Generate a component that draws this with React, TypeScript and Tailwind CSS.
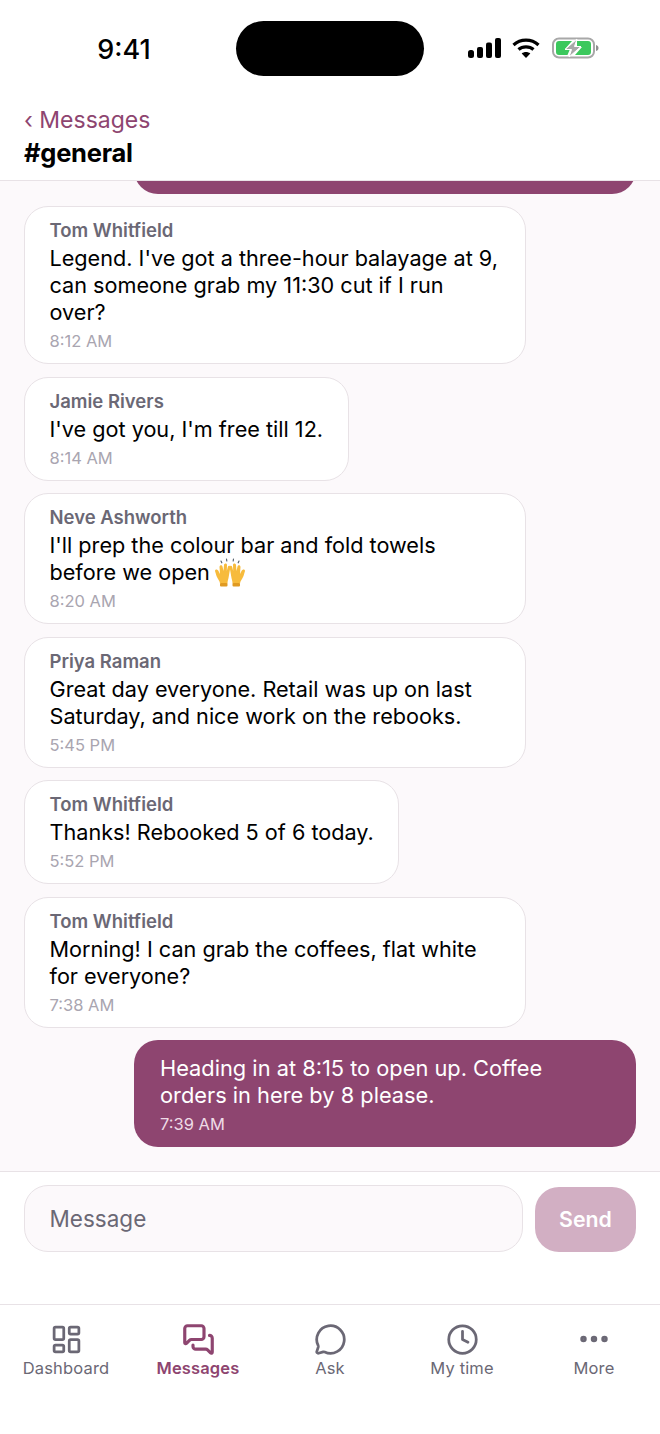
import React from 'react';
import { LayoutDashboard, MessagesSquare, MessageCircle, Clock, Ellipsis } from 'lucide-react';

const messages = [
  { name: 'Tom Whitfield', lines: ["Legend. I've got a three-hour balayage at 9,", 'can someone grab my 11:30 cut if I run', 'over?'], time: '8:12 AM', wide: true },
  { name: 'Jamie Rivers', lines: ["I've got you, I'm free till 12."], time: '8:14 AM' },
  { name: 'Neve Ashworth', lines: ["I'll prep the colour bar and fold towels", 'before we open'], time: '8:20 AM', wide: true, emoji: true },
  { name: 'Priya Raman', lines: ['Great day everyone. Retail was up on last', 'Saturday, and nice work on the rebooks.'], time: '5:45 PM', wide: true },
  { name: 'Tom Whitfield', lines: ['Thanks! Rebooked 5 of 6 today.'], time: '5:52 PM' },
  { name: 'Tom Whitfield', lines: ['Morning! I can grab the coffees, flat white', 'for everyone?'], time: '7:38 AM', wide: true },
];

function Hands() {
  return (
    <svg width="32" height="29" viewBox="0 0 32 29" className="inline-block align-[-5px] -mt-[8px] -mb-[2px] -ml-[2px]">
      <g fill="#f7bb3c">
        <path d="M1 13c0-2 2.500-2 3.500 0L6 16l-.5-7c0-2 2.500-2.500 3-.5L9.500 13l.5-6c.3-2 3-2 3 0l-.2 6 1-4c.5-1.800 2.700-1.300 2.500.5L14.500 20c-.5 2-1 3.500-1 5.500H6C6 23 3.500 21 2.500 18z" />
        <path d="M31 13c0-2-2.500-2-3.500 0L26 16l.5-7c0-2-2.500-2.500-3-.5L22.500 13l-.5-6c-.3-2-3-2-3 0l.2 6-1-4c-.5-1.800-2.700-1.300-2.500.5L17.500 20c.5 2 1 3.500 1 5.500H26c0-2.500 2.500-4.500 3.500-7.500z" />
      </g>
      <g fill="#e09a22">
        <rect x="6" y="25" width="7.500" height="3.500" rx="1" />
        <rect x="18.500" y="25" width="7.500" height="3.500" rx="1" />
      </g>
      <g stroke="#5b6670" strokeWidth="1.200" strokeLinecap="round">
        <path d="M7 3l.8 1.800M12.500 1l.3 2M19.500 1l-.3 2M25 3l-.8 1.800" />
      </g>
    </svg>
  );
}

function StatusIcons() {
  return (
    <div className="flex items-center">
      <svg width="33" height="20" viewBox="0 0 33 20" fill="#000">
        <rect x="0" y="12" width="6" height="8" rx="2.500" />
        <rect x="9" y="9" width="6" height="11" rx="2" />
        <rect x="18" y="4.500" width="6" height="15.500" rx="2" />
        <rect x="27" y="0" width="6" height="20" rx="2" />
      </svg>
      <svg width="28" height="20" viewBox="0 0 28 20" fill="none" stroke="#000" strokeWidth="3.200" className="ml-[11px]">
        <path d="M1.500 7C8.500 .6 19.500 .6 26.500 7" />
        <path d="M6.500 11.500C10.500 8 17.500 8 21.500 11.500" />
        <path d="M14 20l-4.300-4.500c2.400-2 6.200-2 8.600 0z" fill="#000" stroke="none" />
      </svg>
      <svg width="47" height="22" viewBox="0 0 47 22" fill="none" className="ml-[12px]">
        <rect x="1" y="1.500" width="41" height="19" rx="6" stroke="#a8a8a8" strokeWidth="2" />
        <path d="M4 7a3 3 0 0 1 3-3h13l-7 8h5l-2.500 6H7a3 3 0 0 1-3-3z" fill="#3cc85d" />
        <path d="M25 4h11a3 3 0 0 1 3 3v8a3 3 0 0 1-3 3H23l7-8h-5z" fill="#3cc85d" />
        <path d="M25 2L13 12.500h6.500L17 20l12-10.500h-6.500z" fill="#a8a8a8" stroke="#fff" strokeWidth="1" />
        <path d="M44 8c1.800.5 2.500 1.500 2.500 3s-.7 2.500-2.500 3z" fill="#8f8f8f" />
      </svg>
    </div>
  );
}

function NavItem({ icon, label, active }: { icon: React.ReactNode; label: string; active?: boolean }) {
  return (
    <div className={`flex-1 flex flex-col items-center ${active ? 'text-[#8e4570]' : 'text-[#6b6875]'}`}>
      <div className="h-[36px] flex items-center justify-center">{icon}</div>
      <span className={`-mt-[1px] text-[16.500px] leading-[24px] tracking-[0.15px] ${active ? 'font-semibold' : 'font-normal'}`}>{label}</span>
    </div>
  );
}

export default function App() {
  return (
    <div className="h-[1434px] w-[660px] bg-white flex flex-col overflow-hidden text-black" style={{ fontFamily: 'Inter, sans-serif' }}>
      <div className="h-[97px] shrink-0 flex items-start pt-[21px]">
        <div className="w-[236px] h-[55px] flex items-center justify-center pl-[12px] pt-[4px]">
          <span className="text-[27px] font-[550]">9:41</span>
        </div>
        <div className="w-[188px] h-[55px] bg-black rounded-full" />
        <div className="flex-1 h-[55px] flex items-center pl-[44px] pb-[2px]">
          <StatusIcons />
        </div>
      </div>

      <div className="shrink-0 h-[84px] px-[24px] border-b-[1.500px] border-[#e8e2e6]">
        <div className="text-[23px] leading-[36px] text-[#8e4570] mt-[5px]">‹ Messages</div>
        <div className="text-[25.500px] leading-[30px] font-bold tracking-[-0.25px]">#general</div>
      </div>

      <div className="flex-1 min-h-0 bg-[#fcf9fb] overflow-hidden flex flex-col justify-end gap-[12.500px] px-[24px] pb-[24px]">
        <div className="shrink-0 self-end w-[502px] h-[107px] rounded-[24px] bg-[#8e4570]" />
        {messages.map((m, i) => (
          <div key={i} className={`shrink-0 self-start bg-white border-[1.500px] border-[#e8e2e6] rounded-[24px] px-[24.500px] pt-[11px] pb-[10px] ${m.wide ? 'w-[502px]' : ''}`}>
            <div className="text-[18.500px] leading-[24px] mb-[3px] font-semibold text-[#6b6875]">{m.name}</div>
            {m.lines.map((l, j) => (
              <div key={j} className="text-[21.650px] leading-[27px] whitespace-nowrap">
                {l}
                {m.emoji && j === 1 ? <> <Hands /></> : null}
              </div>
            ))}
            <div className="text-[16.500px] leading-[24px] mt-[3px] text-[#a9a5b0]">{m.time}</div>
          </div>
        ))}
        <div className="shrink-0 self-end w-[502px] bg-[#8e4570] text-white rounded-[24px] px-[26px] pt-[15px] pb-[11px]">
          <div className="text-[21.800px] leading-[27px] whitespace-nowrap">Heading in at 8:15 to open up. Coffee</div>
          <div className="text-[21.800px] leading-[27px] whitespace-nowrap">orders in here by 8 please.</div>
          <div className="text-[16.500px] leading-[24px] mt-[3px] text-[#eedbe6]">7:39 AM</div>
        </div>
      </div>

      <div className="shrink-0 h-[133px] border-t-[1.500px] border-[#e8e2e6] px-[24px] pt-[13px] flex items-start gap-[12px]">
        <div className="flex-1 h-[67px] rounded-[24px] bg-[#fcf9fb] border-[1.500px] border-[#e8e2e6] flex items-center px-[24.500px] text-[22.500px] text-[#6b6875]">
          Message
        </div>
        <div className="w-[101px] h-[65px] mt-[2px] rounded-[24px] bg-[#d2afc3] text-white text-[21.300px] font-semibold flex items-center justify-center">
          Send
        </div>
      </div>

      <div className="shrink-0 h-[130px] border-t-[1.500px] border-[#e8e2e6] pt-[16px] flex">
        <NavItem label="Dashboard" icon={<LayoutDashboard size={33} strokeWidth={2} />} />
        <NavItem label="Messages" active icon={<MessagesSquare size={33} strokeWidth={2.300} />} />
        <NavItem label="Ask" icon={<MessageCircle size={33} strokeWidth={2} />} />
        <NavItem label="My time" icon={<Clock size={33} strokeWidth={2} />} />
        <NavItem label="More" icon={<Ellipsis size={36} strokeWidth={2.300} />} />
      </div>
    </div>
  );
}
